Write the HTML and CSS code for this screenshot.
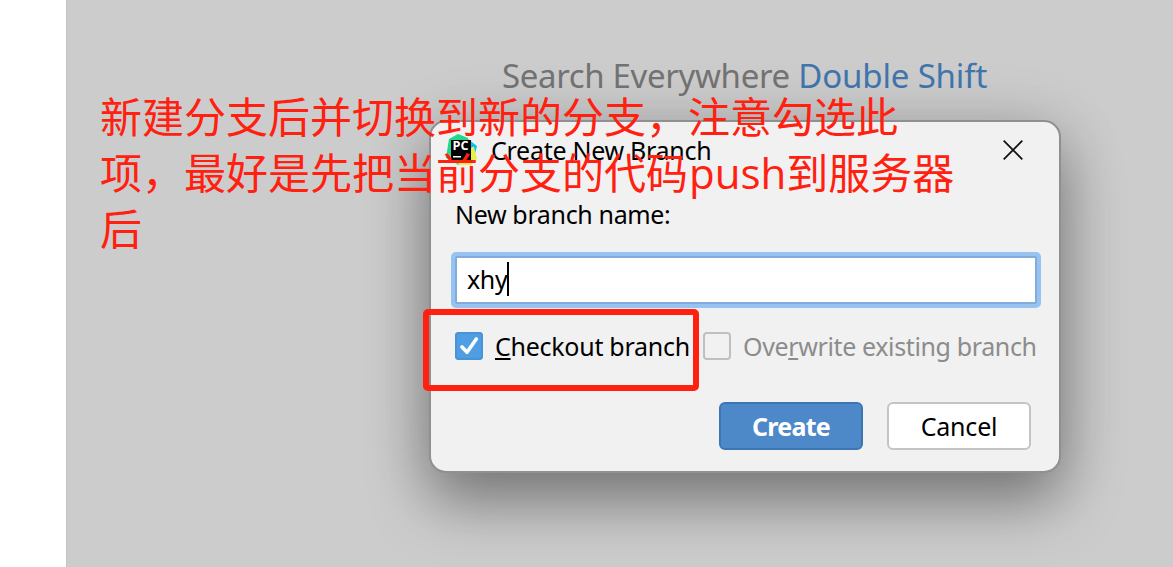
FILE: index.html
```html
<!DOCTYPE html>
<html lang="zh-CN">
<head>
    <meta charset="UTF-8">
    <meta name="viewport" content="width=device-width, initial-scale=1.0">
    <title>Create New Branch</title>
    <link rel="stylesheet" href="styles.css">
</head>
<body>
    <div class="editor">
        <div class="hint"><span class="hint-name">Search Everywhere</span> <span class="shortcut">Double Shift</span></div>
    </div>

    <div class="dialog">
        <div class="title-bar">
            <svg class="app-icon" width="32" height="32" viewBox="0 0 32 32">
                <path d="M22 5 L31 12 L28 24 L20 22 Z" fill="#07c3f2"/>
                <path d="M12 0 L22 4 L24 18 L12 28 L0 24 L3 5 Z" fill="#21d789"/>
                <path d="M26 13 L28 13 L31 25 L25 31 L12 31 L6 27 L20 20 Z" fill="#e4f04c"/>
                <path d="M1 23 L8 22 L16 26 L12 31 Z" fill="#5be276"/>
                <rect x="5" y="6" width="20" height="20" fill="#000"/>
                <text class="app-letters" x="6.5" y="15.8" textLength="16" lengthAdjust="spacingAndGlyphs">PC</text>
                <rect x="7" y="22" width="8" height="1.5" fill="#fff"/>
            </svg>
            <span class="title">Create New Branch</span>
            <svg class="close" width="20" height="20" viewBox="0 0 20 20">
                <path d="M0.7 0.7 L19.3 19.3 M19.3 0.7 L0.7 19.3" stroke="#111" stroke-width="1.8"/>
            </svg>
        </div>
        <div class="label">New branch name:</div>
        <div class="input"><span class="value">xhy</span><span class="caret"></span></div>
        <div class="options">
            <div class="check checked">
                <svg width="28" height="28" viewBox="0 0 28 28">
                    <path d="M7 15 L12 20.3 L21.3 7" fill="none" stroke="#fff" stroke-width="3.6" stroke-linecap="round" stroke-linejoin="round"/>
                </svg>
            </div>
            <span class="checkout"><u>C</u>heckout branch</span>
            <div class="check disabled"></div>
            <span class="overwrite">Ove<u>r</u>write existing branch</span>
        </div>
        <div class="buttons">
            <div class="btn primary">Create</div>
            <div class="btn">Cancel</div>
        </div>
    </div>

    <div class="highlight"></div>
    <div class="note">新建分支后并切换到新的分支，注意勾选此<br>项，最好是先把当前分支的代码<span class="latin">push</span>到服务器<br>后</div>
</body>
</html>
```
FILE: styles.css
```css
body {
    margin: 0;
    height: 567px;
    position: relative;
    overflow: hidden;
    display: flex;
    background: #fff;
    font-family: "Noto Sans", "Noto Sans CJK SC", sans-serif;
    font-size: 25px;
    color: #000;
    white-space: nowrap;
}
.editor {
    flex: 1;
    margin-left: 66px;
    padding: 52px 0 0 435px;
    border-left: 1px solid #c3c3c3;
    box-sizing: border-box;
    background: #ccc;
}
.hint {
    font-size: 33px;
    line-height: 48px;
    letter-spacing: -0.15px;
    color: #737373;
}
.hint-name {
    letter-spacing: -0.35px;
}
.shortcut {
    color: #4175ac;
}
.dialog {
    position: absolute;
    left: 429px;
    top: 120px;
    width: 632px;
    height: 353px;
    box-sizing: border-box;
    border: 2px solid #909090;
    border-radius: 17px;
    background: #f1f1f1;
    box-shadow: 0 30px 60px rgba(0, 0, 0, 0.36), 0 4px 65px rgba(0, 0, 0, 0.14);
}
.title-bar {
    display: flex;
    align-items: center;
    height: 56px;
    padding: 0 36px 0 15px;
}
.app-icon {
    display: block;
}
.app-letters {
    font-family: "Open Sans", sans-serif;
    font-weight: bold;
    font-size: 12px;
    fill: #fff;
}
.title {
    flex: 1;
    margin-left: 13px;
    line-height: 36px;
    letter-spacing: -0.28px;
}
.close {
    display: block;
}
.label {
    margin: 18px 0 0 24px;
    line-height: 36px;
    letter-spacing: -0.35px;
}
.input {
    display: flex;
    align-items: center;
    height: 44px;
    margin: 24px 22px 0 24px;
    padding-left: 10px;
    border: 2px solid #84acdb;
    outline: 4px solid #97c3f3;
    border-radius: 1px;
    background: #fff;
}
.value {
    margin-top: -3px;
    letter-spacing: -0.4px;
}
.caret {
    width: 2px;
    height: 34px;
    margin-top: -2px;
    background: #000;
}
.options {
    display: flex;
    align-items: center;
    height: 28px;
    margin: 28px 0 0 24px;
}
.options u {
    text-decoration-thickness: 2px;
    text-underline-offset: 2px;
    text-decoration-skip-ink: none;
}
.check {
    width: 28px;
    height: 28px;
    flex-shrink: 0;
    box-sizing: border-box;
    border-radius: 4px;
}
.checked {
    background: #4f9ee3;
    box-shadow: inset 0 0 0 2px #4b93d7;
}
.disabled {
    border: 2px solid #bfbfbf;
}
.checkout {
    width: 220px;
    padding-left: 12px;
    box-sizing: border-box;
    letter-spacing: -0.27px;
}
.overwrite {
    margin-left: 12px;
    color: #8c8c8c;
    letter-spacing: -0.37px;
}
.buttons {
    display: flex;
    justify-content: flex-end;
    gap: 24px;
    margin: 42px 28px 0 0;
}
.btn {
    width: 144px;
    height: 48px;
    box-sizing: border-box;
    border: 2px solid #c4c4c4;
    border-radius: 6px;
    background: #fff;
    line-height: 44px;
    text-align: center;
    letter-spacing: -0.2px;
}
.primary {
    border-color: #3d75b3;
    background: #4d89c9;
    color: #fff;
    font-weight: bold;
    letter-spacing: -0.7px;
}
.highlight {
    position: absolute;
    left: 423px;
    top: 309px;
    width: 276px;
    height: 82px;
    box-sizing: border-box;
    border: 6px solid #ff2010;
    border-radius: 5px;
}
.note {
    position: absolute;
    left: 100px;
    top: 87px;
    font-family: "Noto Sans CJK SC", sans-serif;
    font-size: 42px;
    line-height: 56px;
    color: #ff2010;
}
.latin {
    margin-left: 1px;
    font-family: "Open Sans", sans-serif;
    line-height: 1;
}
```
